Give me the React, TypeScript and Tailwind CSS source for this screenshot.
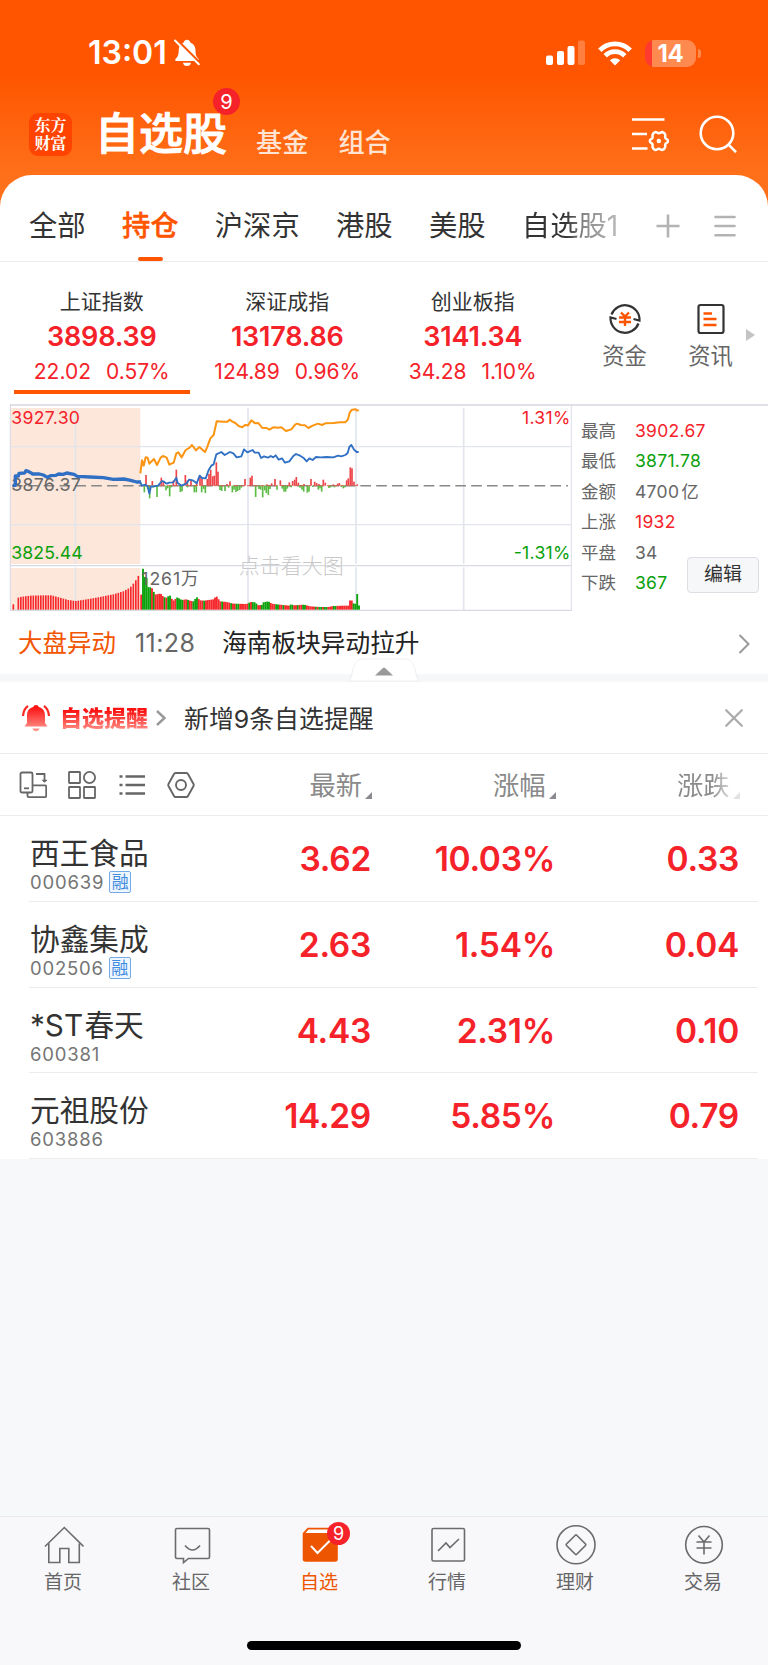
import type { ReactNode } from "react";

type Quote = { name: string; code: string; margin?: boolean; price: string; pct: string; diff: string };

const tabs = ["全部", "持仓", "沪深京", "港股", "美股", "自选股1"];

const indices = [
  { name: "上证指数", value: "3898.39", diff: "22.02", pct: "0.57%" },
  { name: "深证成指", value: "13178.86", diff: "124.89", pct: "0.96%" },
  { name: "创业板指", value: "3141.34", diff: "34.28", pct: "1.10%" },
];

const stats = [
  { label: "最高", value: "3902.67", color: "text-[#f5222a]" },
  { label: "最低", value: "3871.78", color: "text-[#0ba10b]" },
  { label: "金额", value: "4700", unit: "亿", color: "text-[#666]" },
  { label: "上涨", value: "1932", color: "text-[#f5222a]" },
  { label: "平盘", value: "34", color: "text-[#666]" },
  { label: "下跌", value: "367", color: "text-[#0ba10b]" },
];

const quotes: Quote[] = [
  { name: "西王食品", code: "000639", margin: true, price: "3.62", pct: "10.03%", diff: "0.33" },
  { name: "协鑫集成", code: "002506", margin: true, price: "2.63", pct: "1.54%", diff: "0.04" },
  { name: "*ST 春天", code: "600381", price: "4.43", pct: "2.31%", diff: "0.10" },
  { name: "元祖股份", code: "603886", price: "14.29", pct: "5.85%", diff: "0.79" },
];

// [x, height] of the momentum bars on the zero line
const upBars = [
  [438, 32], [457, 14], [484, 24], [490, 12], [520, 15], [529, 48], [556, 32], [562, 16], [573, 16], [590, 10],
  [600, 30], [606, 20], [622, 20], [627, 35], [632, 48], [638, 28], [643, 30], [649, 70], [654, 42], [681, 5],
  [690, 13], [735, 20], [751, 24], [756, 30], [801, 4], [815, 7], [825, 20], [841, 16], [868, 10], [878, 14],
  [884, 18], [889, 26], [895, 9], [912, 5], [933, 20], [944, 12], [950, 8], [957, 5], [970, 18], [976, 9],
  [1000, 4], [1013, 6], [1018, 8], [1040, 16], [1045, 22], [1051, 55], [1056, 52], [1062, 12], [1072, 4],
];
const downBars = [
  [433, 20], [443, 10], [449, 38], [459, 6], [471, 34], [498, 14], [503, 8], [509, 32], [514, 5], [541, 19],
  [546, 17], [562, 5], [583, 20], [589, 20], [605, 20], [611, 10], [616, 22], [660, 13], [665, 16], [675, 16],
  [686, 6], [697, 20], [702, 12], [708, 19], [713, 16], [719, 13], [724, 6], [767, 34], [777, 10], [782, 12],
  [788, 35], [794, 14], [799, 22], [805, 28], [810, 10], [831, 12], [847, 9], [852, 18], [857, 18], [862, 9],
  [873, 5], [900, 6], [906, 12], [911, 18], [922, 21], [927, 18], [938, 4], [955, 12], [960, 8], [965, 18],
  [987, 7], [992, 5], [1003, 5], [1024, 4], [1030, 8], [1035, 5],
];

const volume = [
  [423, 36], [428, 127], [434, 98], [439, 100], [444, 68], [455, 66], [462, 52], [468, 44], [475, 48], [485, 47],
  [490, 38], [500, 36], [509, 44], [514, 34], [520, 27], [532, 37], [545, 29], [560, 31], [570, 27], [580, 25],
  [590, 38], [600, 28], [612, 27], [640, 31], [649, 41], [660, 25], [680, 23], [700, 18], [740, 17], [752, 23],
  [765, 22], [775, 13], [785, 14], [790, 22], [805, 25], [815, 18], [830, 16], [868, 12], [874, 17], [880, 13],
  [912, 15], [930, 10], [960, 8], [985, 8], [1000, 11], [1035, 12], [1046, 12], [1050, 28], [1058, 27],
  [1062, 15], [1067, 18], [1072, 50], [1078, 4],
];
const greenRanges = [
  [426, 453], [458, 465], [492, 497], [501, 513], [529, 551], [562, 566], [576, 594], [612, 617], [666, 671],
  [692, 697], [709, 717], [737, 741], [747, 750], [757, 770], [782, 809], [828, 834], [849, 854], [869, 882],
  [889, 894], [905, 918], [945, 950], [958, 966], [972, 985], [1001, 1007], [1023, 1028], [1060, 1080],
];
const preOpen = [
  [40, 16], [50, 34], [60, 38], [90, 42], [130, 43], [155, 43], [180, 36], [205, 29], [228, 26], [260, 31],
  [300, 38], [340, 46], [370, 55], [390, 66], [405, 84], [416, 103],
];

function heightAt(points: number[][], x: number) {
  const i = points.findIndex((p) => p[0] >= x);
  if (i < 0) return points[points.length - 1][1];
  if (i === 0) return points[0][1];
  const [x0, h0] = points[i - 1];
  const [x1, h1] = points[i];
  return h0 + ((x - x0) / (x1 - x0)) * (h1 - h0);
}

const range = (from: number, to: number, step: number) =>
  Array.from({ length: Math.floor((to - from) / step) + 1 }, (_, i) => from + i * step);

function Chart() {
  return (
    <svg viewBox="0 24 1716 630" className="block h-[210px] w-[572px] shrink-0">
      <rect x="33" y="39" width="388" height="468" fill="#fde6da" />
      <rect x="33" y="519" width="388" height="126" fill="#fde6da" />
      <g stroke="#e3e5ed" strokeWidth="5">
        {[226, 744, 1068, 1391].map((x) => (
          <path key={x} d={`M${x} 38V506M${x} 517V645`} />
        ))}
        <path d="M33 155H1714M33 389H1714" strokeWidth="4" />
        <path d="M31 28V646" strokeWidth="3" stroke="#d5d7df" />
        <path d="M1714 28V646" strokeWidth="3" stroke="#dcdee6" />
        <path d="M30 512H1714M30 646H1715" strokeWidth="4" stroke="#d8dae1" />
      </g>
      <path d="M36 272H1704" stroke="#888" strokeWidth="4.500" strokeDasharray="32 15.5" />
      <g className="font-['Inter','Noto_Sans_CJK_SC',sans-serif]" fontSize="53">
        <text x="34" y="289" fill="#666" textLength="208">3876.37</text>
        <text x="34" y="86" fill="#f5222a" textLength="206">3927.30</text>
        <text x="34" y="492" fill="#0ba10b" textLength="214">3825.44</text>
        <text x="1711" y="86" fill="#f5222a" textAnchor="end" textLength="145">1.31%</text>
        <text x="1711" y="492" fill="#0ba10b" textAnchor="end" textLength="170">-1.31%</text>
        <text x="716" y="535" fill="#c9c9c9" fontSize="63" fontWeight="300">点击看大图</text>
      </g>
      {upBars.map(([x, h]) => (
        <rect key={x} x={x - 2.5} y={272 - h} width="5" height={h} fill="#ee4348" />
      ))}
      {downBars.map(([x, h]) => (
        <rect key={x} x={x - 2.5} y="272" width="5" height={h} fill="#5bbb45" />
      ))}
      <path d="M421 272H1078" stroke="#d46a50" strokeWidth="3" strokeDasharray="12 8" />
      <g fill="none" strokeLinejoin="round">
        <polyline
          stroke="#2f6fc4"
          strokeWidth="10"
          points="38,271 46,271 46,243 55,243 57,235 74,234 78,227 84,229 92,233 98,237 118,237 130,240 142,247 152,242 168,241 176,237 190,238 200,234 222,238 232,244 270,246 310,248 340,253 372,252 392,256 410,261 423,261"
        />
        <polyline
          stroke="#2f6fc4"
          strokeWidth="5.500"
          points="421,261 425,272 436,269 443,274 448,296 453,274 462,274 474,272 486,258 492,260 500,266 508,263 520,262 529,248 533,264 545,272 560,265 567,254 578,256 590,265 599,242 606,249 617,250 626,225 634,212 641,208 649,178 664,171 674,180 690,171 700,175 710,187 724,184 732,163 742,172 758,165 764,173 776,173 783,189 792,184 804,188 812,183 820,187 827,181 836,194 846,190 855,203 868,199 880,183 888,177 898,181 912,190 920,199 928,190 938,195 948,186 962,187 980,186 1000,187 1014,182 1024,184 1036,180 1043,174 1048,156 1054,150 1062,164 1070,171 1076,171"
        />
        <polyline
          stroke="#fb9410"
          strokeWidth="6"
          points="421,235 426,196 431,212 437,187 443,188 448,206 456,198 462,192 471,210 482,188 489,183 500,188 508,209 521,203 529,175 535,172 545,187 557,165 569,158 576,150 588,166 598,156 615,171 621,158 631,130 641,120 650,79 670,80 682,80 690,74 697,80 706,84 716,93 727,97 735,90 744,91 754,76 766,85 775,84 786,98 800,99 808,104 820,97 835,98 844,97 858,108 874,103 886,88 892,86 902,90 915,91 925,99 938,92 954,86 966,90 976,85 1000,84 1020,82 1036,82 1044,73 1049,53 1056,44 1067,43 1071,47 1076,45"
        />
      </g>
      {range(40, 417, 7.5).filter((x) => x < 42 || x > 48).map((x) => (
        <rect key={x} x={x - 2.5} y={644 - heightAt(preOpen, x)} width="5" height={heightAt(preOpen, x)} fill="#f5282c" />
      ))}
      {range(423.5, 1080, 5.4).map((x) => (
        <rect
          key={x}
          x={x - 2.7}
          y={644 - heightAt(volume, x)}
          width="5.6"
          height={heightAt(volume, x)}
          fill={greenRanges.some(([a, b]) => x >= a && x <= b) ? "#0ba10b" : "#f5282c"}
        />
      ))}
      <text
        x="424"
        y="570"
        fill="#666"
        fontSize="53"
        textLength="172"
        className="font-['Inter','Noto_Sans_CJK_SC',sans-serif]"
      >
        1261万
      </text>
    </svg>
  );
}

function StatusBar() {
  return (
    <div className="flex h-[106px] items-center pr-[67px] pl-[88px]">
      <span className="text-[32px] leading-[32px] font-semibold">13:01</span>
      <svg viewBox="0 0 26 28" className="ml-[7px] h-7 w-[26px]">
        <path
          d="M13 0.800c1.700 0 2.900 1 3.300 2.600 3.300 1.200 5.200 4 5.200 7.800 0 5 1 7 3 8.800.5.5.4 2-.8 2H2.300C1 22 .9 20.500 1.500 20c2.100-2 3.200-3.800 3.200-8.800 0-3.800 1.800-6.600 5-7.800C10.200 1.800 11.400.8 13 .8zM9 23.700h8c-.2 2-1.700 3.300-4 3.300s-3.800-1.300-4-3.300z"
          fill="#fff"
        />
        <path d="M2.500 0.500L27 25" stroke="#ff5500" strokeWidth="2.500" />
        <path d="M1 1.500L24.800 25.300" stroke="#fff" strokeWidth="2" strokeLinecap="round" />
      </svg>
      <svg viewBox="0 0 40 26" className="ml-auto h-[26px] w-10" fill="#fff">
        <rect x="1" y="15.500" width="7" height="9.500" rx="2" />
        <rect x="12" y="11" width="7" height="14" rx="2" />
        <rect x="22.500" y="6" width="7" height="19" rx="2" />
        <rect x="33" y="0.500" width="7" height="24.500" rx="2" opacity="0.250" />
      </svg>
      <svg viewBox="0 0 34 25" className="ml-[13px] h-[25px] w-[34px]" fill="none" stroke="#fff" strokeWidth="4.800">
        <path d="M1.800 9.200a21.500 21.500 0 0 1 30.400 0" />
        <path d="M7.200 14.800a13.800 13.800 0 0 1 19.600 0" />
        <path d="M17 24.500l-5.200-5.200a7.400 7.400 0 0 1 10.400 0z" fill="#fff" stroke="none" />
      </svg>
      <div className="ml-[13px] flex h-[27px] w-[51px] items-center justify-center rounded-[9px] bg-[linear-gradient(to_right,#ff3b30_7px,#ff8a50_7px)] text-[24px] leading-[27px] font-bold tracking-[-0.300px]">
        14
      </div>
      <div className="ml-[2px] h-[9px] w-[3px] rounded-r-full bg-[#ff8a50]" />
    </div>
  );
}

function Header() {
  return (
    <header className="h-[215px] bg-[linear-gradient(to_bottom,#ff5500_75px,#ff701a_175px)] text-white">
      <StatusBar />
      <div className="flex h-14 items-center pl-[29px]">
        <div className="flex h-[43px] w-[43px] items-center justify-center rounded-[9px] bg-[#ff4300]">
          <div className="w-8 text-[16px] leading-[18px] font-bold break-all font-['Noto_Serif_CJK_SC','Noto_Sans_CJK_SC',sans-serif]">
            东方财富
          </div>
        </div>
        <div className="relative ml-[23px] w-[131px] text-[44px] leading-[56px] font-medium whitespace-nowrap [-webkit-text-stroke:0.900px_white]">
          自选股
          <span className="absolute -top-[18px] left-[118px] flex h-[27px] w-[27px] items-center justify-center rounded-full bg-[#f5222a] text-[20px] leading-[20px] font-normal [-webkit-text-stroke:0]">
            9
          </span>
        </div>
        <div className="mt-[17px] ml-[30px] flex gap-[30px] text-[26.200px] leading-8 font-medium text-[#ffe3d3]">
          <span>基金</span>
          <span>组合</span>
        </div>
        <svg viewBox="0 0 38 36" className="ml-auto h-9 w-[38px]" fill="none" stroke="#fff" strokeWidth="2.500">
          <path d="M1 3.500H33.500M1 18H16M1 32.500H16.500" />
          <path
            d="M24.500 16c1.300 0 1.700 1.200 3.300 1.200S30 16 31.300 16c1.700.5 2.700 1.500 3 3 0 1.200-.4 2 .2 3.200.7 1 2.500 1 2.500 2.800s-1.800 1.900-2.500 2.900c-.6 1.200-.2 1.900-.3 3.100-.3 1.500-1.300 2.500-3 3-1.300 0-1.800-1.200-3.400-1.200S25.800 34 24.500 34c-1.700-.5-2.700-1.500-3-3 0-1.200.4-1.900-.2-3.100-.7-1-2.500-1.100-2.500-2.900s1.800-1.800 2.500-2.800c.6-1.200.2-2 .2-3.200.3-1.500 1.300-2.500 3-3z"
          />
          <circle cx="27.800" cy="25" r="2.200" fill="#fff" stroke="none" />
        </svg>
        <svg viewBox="0 0 38 38" className="mr-[31px] ml-[30px] h-[38px] w-[38px]" fill="none" stroke="#fff" strokeWidth="2.600">
          <circle cx="18" cy="18" r="16.300" />
          <path d="M29.300 29.300L37 37.200" />
        </svg>
      </div>
    </header>
  );
}

function Tabs() {
  return (
    <nav className="flex h-[87px] items-center border-b border-[#ececee] pl-[29px] text-[28.300px] leading-10 text-[#333]">
      <div className="flex gap-[36.300px] pt-[16px]">
        {tabs.map((t, i) => {
          if (i === 1) {
            return (
              <div key={t} className="relative font-medium text-[#ff5500] [-webkit-text-stroke:0.400px_#ff5500]">
                {t}
                <span className="absolute -bottom-[15px] left-[16px] h-1 w-[25px] rounded-sm bg-[#ff5500]" />
              </div>
            );
          }
          if (i === tabs.length - 1) {
            return (
              <div
                key={t}
                className="bg-[linear-gradient(to_right,#333_45%,#888_65%,#bbb_100%)] bg-clip-text text-transparent"
              >
                {t}
              </div>
            );
          }
          return <div key={t}>{t}</div>;
        })}
      </div>
      <svg viewBox="0 0 24 24" className="mt-4 ml-auto h-6 w-6" stroke="#b3b3b3" strokeWidth="2.600">
        <path d="M0.500 12H23.500M12 0.500V23.500" />
      </svg>
      <svg viewBox="0 0 22 24" className="mt-4 mr-8 ml-[34px] h-6 w-[22px]" stroke="#b3b3b3" strokeWidth="2.600" strokeLinecap="round">
        <path d="M1.500 3H20.500M1.500 12H20.500M1.500 21.200H20.500" />
      </svg>
    </nav>
  );
}

function Shortcut({ label, children }: { label: string; children: ReactNode }) {
  return (
    <div className="flex w-[86px] flex-col items-center pt-[40px] text-[22.300px] leading-[30px] text-[#666]">
      <svg viewBox="0 0 34 34" className="mb-[5px] h-[34px] w-[34px]" fill="none" stroke="#333" strokeWidth="2.200">
        {children}
      </svg>
      {label}
    </div>
  );
}

function Indices() {
  return (
    <section className="flex h-[141px] pl-[9px]">
      {indices.map((it, i) => (
        <div key={it.name} className="flex w-[185.500px] flex-col items-center pt-[25px] text-[#f5222a]">
          <div className="text-[21px] leading-[30px] text-[#333]">{it.name}</div>
          <div className="mt-[3px] text-[27px] leading-[34px] font-semibold tracking-[-0.2px]">{it.value}</div>
          <div className="mt-[3px] flex gap-[15px] text-[21px] leading-[30px]">
            <span>{it.diff}</span>
            <span>{it.pct}</span>
          </div>
          {i === 0 && <div className="mt-[3px] h-1 w-[176px] bg-[#ff5500]" />}
        </div>
      ))}
      <div className="ml-[16px] flex">
        <Shortcut label="资金">
          <path d="M3.500 12.500A14.500 14.500 0 0 1 31.500 18.500L25.500 17M30.500 21.500A14.500 14.500 0 0 1 2.500 15.500L8.500 17" />
          <path d="M13 10.500l4 4 4-4M11 15.500h12M11 20h12M17 14.500V24" stroke="#ff5500" strokeWidth="2.400" />
        </Shortcut>
        <Shortcut label="资讯">
          <rect x="4.500" y="3" width="25" height="28" rx="2" />
          <path d="M9.500 11.500h8.500M9.500 17h13M9.500 23h13" stroke="#ff5500" strokeWidth="2.400" />
        </Shortcut>
      </div>
      <svg viewBox="0 0 9 12" className="mt-[67px] -ml-[8px] h-3 w-[9px]" fill="#c4c4c4">
        <path d="M0 0L9 6L0 12z" />
      </svg>
    </section>
  );
}

function Overview() {
  return (
    <section className="flex h-[210px] bg-[linear-gradient(to_bottom,transparent_1px,#e0e1e8_1px,#e0e1e8_3px,transparent_3px)] bg-[length:758px_210px] bg-[position:10px_0] bg-no-repeat">
      <Chart />
      <div className="flex w-[115px] flex-col pt-[13px] pl-[9px] whitespace-nowrap">
        {stats.map((s) => (
          <div key={s.label} className="flex h-[30.400px] items-center text-[17.500px]">
            <span className="w-[54px] shrink-0 text-[#666]">{s.label}</span>
            <span className={s.color}>
              <span className="tracking-[0.300px]">{s.value}</span>
              {s.unit && <span className="ml-[2px]">{s.unit}</span>}
            </span>
          </div>
        ))}
      </div>
      <button className="mt-[154px] h-9 w-[72px] shrink-0 rounded border border-[#dddee3] bg-[#f6f7f9] text-[19px] text-[#333]">
        编辑
      </button>
    </section>
  );
}

function News() {
  return (
    <section className="relative flex h-[69px] items-center border-b-8 border-[#f6f7f9] pl-[18px] text-[25px]">
      <span className="text-[24.500px] text-[#f25500]">大盘异动</span>
      <span className="ml-[19px] w-[87px] tracking-[0.400px] text-[#666]">11:28</span>
      <span className="text-[24.700px] text-[#222]">海南板块异动拉升</span>
      <svg viewBox="0 0 12 20" className="mr-[18px] ml-auto h-5 w-3" fill="none" stroke="#999" strokeWidth="2">
        <path d="M1.500 1L10.500 10L1.500 19" />
      </svg>
      <svg viewBox="0 0 70 24" className="absolute -bottom-[8px] left-[349px] h-6 w-[70px]" fill="#fff">
        <path d="M1 23C3 18 3 13 5 8C6.500 3.500 9 1 15 1H55C61 1 63.500 3.500 65 8C67 13 67 18 69 23z" stroke="#eff0f2" />
        <path d="M26 17.500L34 10Q35 9 36 10L44 17.500z" fill="#999" />
      </svg>
    </section>
  );
}

function Alert() {
  return (
    <section className="flex h-[72px] items-center border-b border-[#ececee] pt-px pl-[21px]">
      <svg viewBox="0 0 30 28" className="h-7 w-[30px]">
        <defs>
          <linearGradient id="bell" x1="0" y1="0" x2="0" y2="1">
            <stop offset="0.100" stopColor="#fb1414" />
            <stop offset="1" stopColor="#ff9a92" />
          </linearGradient>
        </defs>
        <path
          d="M15 1c1.500 0 2.500.8 2.700 2C22 4 24 7.300 24 11.500V19l2.500 3.500H3.500L6 19v-7.500C6 7.300 8 4 12.300 3 12.500 1.800 13.500 1 15 1zM11.500 24.500h7c-.5 1.800-1.700 2.700-3.500 2.700s-3-.9-3.500-2.700z"
          fill="url(#bell)"
        />
        <path d="M7 2Q2.500 5 2 12M23 2Q27.500 5 28 12" fill="none" stroke="#fb2a22" strokeWidth="2.200" />
      </svg>
      <span className="ml-[9px] bg-[linear-gradient(to_bottom,#fb1212_25%,#ff857c_85%)] bg-clip-text text-[22px] leading-[30px] font-black text-transparent">
        自选提醒
      </span>
      <svg viewBox="0 0 10 16" className="ml-[8px] h-4 w-[10px]" fill="none" stroke="#999" strokeWidth="2.400">
        <path d="M1 1L8.500 8L1 15" />
      </svg>
      <span className="ml-[18px] pt-[4px] text-[24.900px] text-[#333]">新增9条自选提醒</span>
      <svg viewBox="0 0 18 18" className="mr-[25px] ml-auto h-[18px] w-[18px]" stroke="#aaa" strokeWidth="2.200" strokeLinecap="round">
        <path d="M1.200 1.200L16.800 16.800M16.800 1.200L1.200 16.800" />
      </svg>
    </section>
  );
}

function SortMark({ fill }: { fill: string }) {
  return (
    <svg viewBox="0 0 7 7" className="mt-[19px] ml-[3px] h-[7px] w-[7px]">
      <path d="M7 0V7H0z" fill={fill} />
    </svg>
  );
}

function Toolbar() {
  return (
    <section className="flex h-[62px] items-center border-b border-[#ececee] pl-[19px] text-[26.300px] leading-9 text-[#8a8a8a]">
      <div className="flex w-[176px] justify-between">
        <svg viewBox="0 0 28 28" className="h-7 w-7" fill="none" stroke="#666" strokeWidth="1.800">
          <rect x="1.500" y="1.500" width="12" height="20" rx="1.500" />
          <path d="M5 17.300h5" />
          <path d="M17 3h8.500v8M8.500 22v3q0 1.200 1.200 1.200H26q1.200 0 1.200-1.200V15.500q0-1.200-1.200-1.200H14" />
          <path d="M22.500 8.800h6l-3 3z" fill="#666" stroke="none" />
        </svg>
        <svg viewBox="0 0 28 28" className="h-7 w-7" fill="none" stroke="#666" strokeWidth="1.800">
          <rect x="1" y="1" width="11" height="11" rx="0.500" />
          <circle cx="21.500" cy="6.500" r="5.600" />
          <rect x="1" y="16" width="11" height="11" rx="0.500" />
          <rect x="16" y="16" width="11" height="11" rx="0.500" />
        </svg>
        <svg viewBox="0 0 28 28" className="h-7 w-7" fill="none" stroke="#666" strokeWidth="2.400">
          <path d="M7.500 5.500H27M7.500 14H27M7.500 22.500H27" />
          <path d="M1.500 5.500h3M1.500 14h3M1.500 22.500h3" />
        </svg>
        <svg viewBox="0 0 28 28" className="h-7 w-7" fill="none" stroke="#666" strokeWidth="1.900" strokeLinejoin="round">
          <path d="M8.500 2h11q1 0 1.500 1l5.500 10q.5 1 0 2L21 25q-.5 1-1.500 1h-11q-1 0-1.500-1L1.500 15q-.5-1 0-2L7 3q.5-1 1.500-1z" />
          <circle cx="14" cy="14" r="5" />
        </svg>
      </div>
      <div className="flex w-[177px] items-center justify-end pt-[3px]">
        最新
        <SortMark fill="#8a8a8f" />
      </div>
      <div className="flex w-[183.500px] items-center justify-end pt-[3px]">
        涨幅
        <SortMark fill="#8a8a8f" />
      </div>
      <div className="flex w-[184px] items-center justify-end pt-[3px]">
        <span className="bg-[linear-gradient(to_right,#8a8a8a_65%,#d8d8d8_100%)] bg-clip-text text-transparent">涨跌</span>
        <SortMark fill="#e2e2e4" />
      </div>
    </section>
  );
}

function QuoteRow({ q }: { q: Quote }) {
  return (
    <div className="mr-[10px] ml-[29px] flex h-[85.750px] border-b border-[#ebecee] text-[#f5222a]">
      <div className="flex w-[162px] flex-col pt-[19px] pl-px">
        <div className="text-[29.700px] leading-9 [word-spacing:-7px] whitespace-nowrap text-[#333]">{q.name}</div>
        <div className="flex h-[22px] items-center text-[18.500px] leading-[22px] text-[#757575]">
          <span className="tracking-[0.800px]">{q.code}</span>
          {q.margin && (
            <span className="ml-[5px] flex h-[22px] w-[22px] items-center justify-center rounded-[2px] border border-[#72aae8] bg-[#eff6fe] text-[17px] text-[#3f8be0]">
              融
            </span>
          )}
        </div>
      </div>
      <div className="flex flex-1 pt-[22px] text-right text-[33.500px] leading-[42px] font-semibold tracking-[-0.300px]">
        <span className="w-[180px]">{q.price}</span>
        <span className="w-[184px]">{q.pct}</span>
        <span className="w-[184px]">{q.diff}</span>
      </div>
    </div>
  );
}

function NavItem({ label, active, children }: { label: string; active?: boolean; children: ReactNode }) {
  return (
    <div
      className={
        active
          ? "flex w-32 flex-col items-center pt-[8px] text-[19px] leading-[26px] text-[#ee5500]"
          : "flex w-32 flex-col items-center pt-[8px] text-[19px] leading-[26px] text-[#666]"
      }
    >
      <div className="relative mb-[5px]">
        <svg viewBox="0 0 40 40" className="h-10 w-10" fill="none" stroke="#6b6b6b" strokeWidth="1.600">
          {children}
        </svg>
        {active && (
          <span className="absolute -top-[3px] left-[27px] flex h-[23px] w-[23px] items-center justify-center rounded-full bg-[#f5222a] text-[18px] text-white">
            9
          </span>
        )}
      </div>
      <span className="mr-[2px]">{label}</span>
    </div>
  );
}

export default function App() {
  return (
    <div className="flex h-[1665px] w-[768px] flex-col overflow-hidden bg-[#f7f8fa] font-['Inter','Noto_Sans_CJK_SC',sans-serif]">
      <Header />
      <main className="-mt-[40px] rounded-t-[32px] bg-white">
        <Tabs />
        <Indices />
        <Overview />
        <News />
        <Alert />
        <Toolbar />
        {quotes.map((q) => (
          <QuoteRow key={q.code} q={q} />
        ))}
      </main>
      <footer className="mt-auto flex h-[149px] flex-col border-t border-[#e9e9ec] bg-[#f8f8fb]">
        <div className="flex">
          <NavItem label="首页">
            <path d="M1 21.500L20.300 2.500L39.500 21.500M4.800 18.500V37.500H15.800V23.500H24.800V37.500H35.300V18.500" />
          </NavItem>
          <NavItem label="社区">
            <path d="M5 3.500H36q1.500 0 1.500 1.500V32q0 1.500-1.500 1.500H16.500L11.500 37.500V33.500H5Q3.500 33.500 3.500 32V5Q3.500 3.500 5 3.500z" />
            <path d="M13 20.500Q20.500 29.500 28 20.500" />
          </NavItem>
          <NavItem label="自选" active>
            <path d="M3.500 8.500L8 3.500H37V34q0 2-2 2H5.500q-2 0-2-2z" fill="#ee5500" stroke="#ee5500" />
            <path d="M8.500 4.500H37L33 8H5.500z" fill="#fff" stroke="none" />
            <path d="M11 21L17.500 28L30 15.500" stroke="#fff" strokeWidth="2" />
          </NavItem>
          <NavItem label="行情">
            <rect x="4" y="3.500" width="32.500" height="32.500" rx="1.500" />
            <path d="M10 26L18 18L22 22.500L31 14" />
          </NavItem>
          <NavItem label="理财">
            <circle cx="20" cy="19.800" r="19" />
            <path d="M19.300 10.200Q20 9.500 20.700 10.200L29.500 19Q30.200 19.800 29.500 20.500L20.700 29.300Q20 30 19.300 29.300L10.500 20.500Q9.800 19.800 10.500 19z" />
          </NavItem>
          <NavItem label="交易">
            <circle cx="20" cy="19.800" r="18.300" />
            <path d="M14.500 10.500L20 17L25.500 10.500M12.500 17H27.500M12.500 23H27.500M20 17V29.500" />
          </NavItem>
        </div>
        <div className="mt-auto mb-[15px] h-[9px] w-[274px] self-center rounded-full bg-black" />
      </footer>
    </div>
  );
}
